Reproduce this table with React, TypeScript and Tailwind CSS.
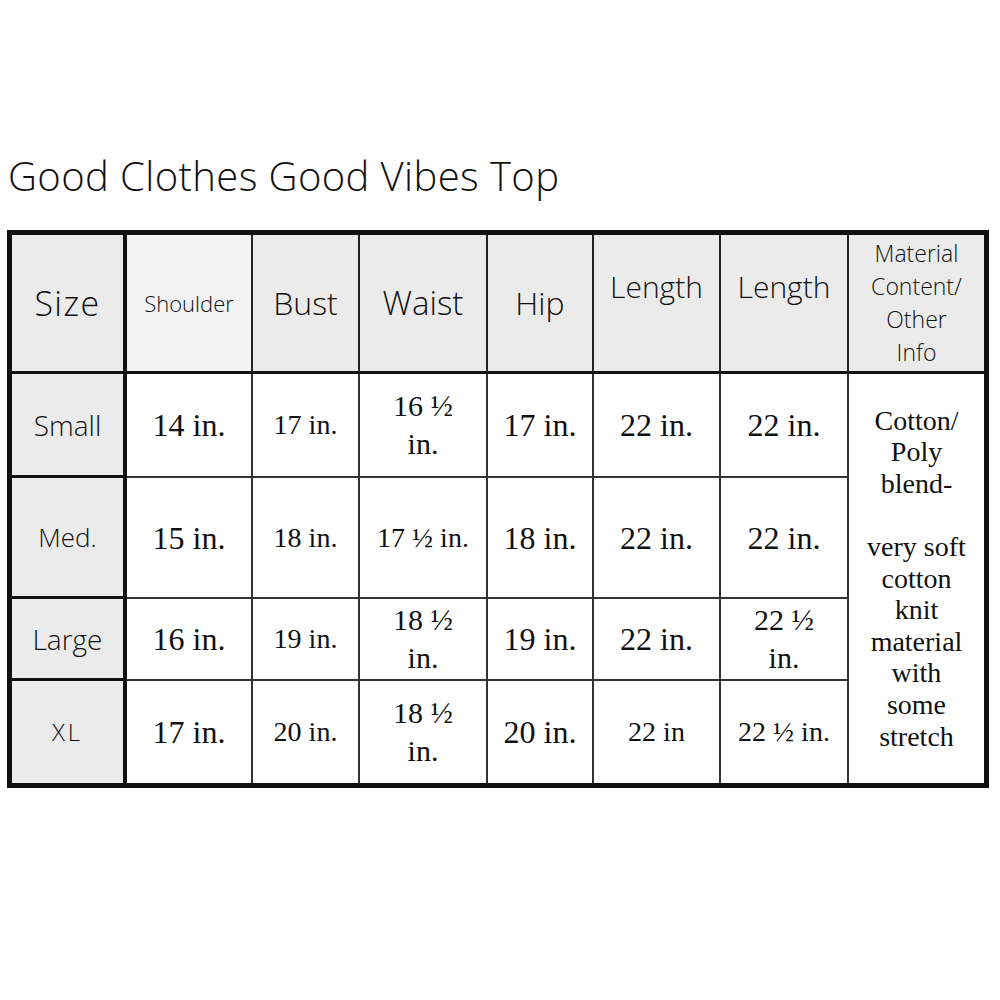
import React from "react";

const hand = "font-['Open_Sans',sans-serif] font-light text-[#111]";
const serif = "font-['Liberation_Serif',serif] text-[#111]";

type Cell = { t: React.ReactNode; s: string };

const rows: { label: string; ls: string; cells: Cell[] }[] = [
  {
    label: "Small",
    ls: "text-[28px]",
    cells: [
      { t: "14 in.", s: "text-[32px]" },
      { t: "17 in.", s: "text-[28px]" },
      { t: <>16 ½<br />in.</>, s: "text-[30px]" },
      { t: "17 in.", s: "text-[32px]" },
      { t: "22 in.", s: "text-[32px]" },
      { t: "22 in.", s: "text-[32px]" },
    ],
  },
  {
    label: "Med.",
    ls: "text-[26px]",
    cells: [
      { t: "15 in.", s: "text-[32px]" },
      { t: "18 in.", s: "text-[28px]" },
      { t: "17 ½ in.", s: "text-[28px]" },
      { t: "18 in.", s: "text-[32px]" },
      { t: "22 in.", s: "text-[32px]" },
      { t: "22 in.", s: "text-[32px]" },
    ],
  },
  {
    label: "Large",
    ls: "text-[28px]",
    cells: [
      { t: "16 in.", s: "text-[32px]" },
      { t: "19 in.", s: "text-[28px]" },
      { t: <>18 ½<br />in.</>, s: "text-[30px]" },
      { t: "19 in.", s: "text-[32px]" },
      { t: "22 in.", s: "text-[32px]" },
      { t: <>22 ½<br />in.</>, s: "text-[30px]" },
    ],
  },
  {
    label: "XL",
    ls: "text-[24px] tracking-[0.12em]",
    cells: [
      { t: "17 in.", s: "text-[32px]" },
      { t: "20 in.", s: "text-[28px]" },
      { t: <>18 ½<br />in.</>, s: "text-[30px]" },
      { t: "20 in.", s: "text-[32px]" },
      { t: "22 in", s: "text-[28px]" },
      { t: "22 ½ in.", s: "text-[28px]" },
    ],
  },
];

export default function App() {
  return (
    <div className="w-[1000px] h-[1000px] bg-white relative">
      <div className="pt-[148px] pl-[8px]">
        <h1 className={`${hand} text-[40px] leading-[56px] tracking-[0.01em]`}>
          Good Clothes Good Vibes Top
        </h1>
      </div>
      <div className="mt-[26px] ml-[7px] w-[982px] border-[5px] border-[#111] grid grid-cols-[115px_126px_107px_128px_106px_127px_128px_135px] grid-rows-[139px_104px_121px_82px_102px]">
        {/* header */}
        <div className={`bg-[#ebebeb] border-r-[4px] border-b-[3px] border-[#111] flex items-center justify-center ${hand} text-[34px] tracking-[0.04em]`}>
          Size
        </div>
        <div className={`bg-[#f2f2f2] border-r-2 border-r-[#222] border-b-[3px] border-b-[#111] flex items-center justify-center ${hand} text-[22px]`}>
          Shoulder
        </div>
        <div className={`bg-[#ebebeb] border-r-2 border-r-[#222] border-b-[3px] border-b-[#111] flex items-center justify-center ${hand} text-[32px]`}>
          Bust
        </div>
        <div className={`bg-[#ebebeb] border-r-2 border-r-[#222] border-b-[3px] border-b-[#111] flex items-center justify-center ${hand} text-[33px]`}>
          Waist
        </div>
        <div className={`bg-[#ebebeb] border-r-2 border-r-[#222] border-b-[3px] border-b-[#111] flex items-center justify-center ${hand} text-[32px]`}>
          Hip
        </div>
        <div className={`bg-[#ebebeb] border-r-2 border-r-[#222] border-b-[3px] border-b-[#111] flex items-center justify-center pb-[34px] ${hand} text-[30px]`}>
          Length
        </div>
        <div className={`bg-[#ebebeb] border-r-2 border-r-[#222] border-b-[3px] border-b-[#111] flex items-center justify-center pb-[34px] ${hand} text-[30px]`}>
          Length
        </div>
        <div className={`bg-[#ebebeb] border-b-[3px] border-b-[#111] flex items-center justify-center text-center ${hand} text-[23px] leading-[33px]`}>
          Material<br />Content/<br />Other<br />Info
        </div>

        {/* material column */}
        <div className={`col-start-8 row-start-2 row-span-4 flex items-center justify-center text-center ${serif} text-[28px] leading-[31.6px]`}>
          <div>
            Cotton/<br />Poly<br />blend-<br /><br />very soft<br />cotton<br />knit<br />material<br />with<br />some<br />stretch
          </div>
        </div>

        {rows.map((r, ri) => {
          const last = ri === rows.length - 1;
          return (
            <React.Fragment key={r.label}>
              <div
                className={`bg-[#ebebeb] border-r-[4px] border-[#111] ${last ? "" : "border-b-[3px]"} flex items-center justify-center ${hand} ${r.ls}`}
              >
                {r.label}
              </div>
              {r.cells.map((c, ci) => (
                <div
                  key={ci}
                  className={`border-r-2 border-[#333] ${last ? "" : "border-b-2"} flex items-center justify-center text-center leading-[38px] ${serif} ${c.s}`}
                >
                  <div>{c.t}</div>
                </div>
              ))}
            </React.Fragment>
          );
        })}
      </div>
    </div>
  );
}
